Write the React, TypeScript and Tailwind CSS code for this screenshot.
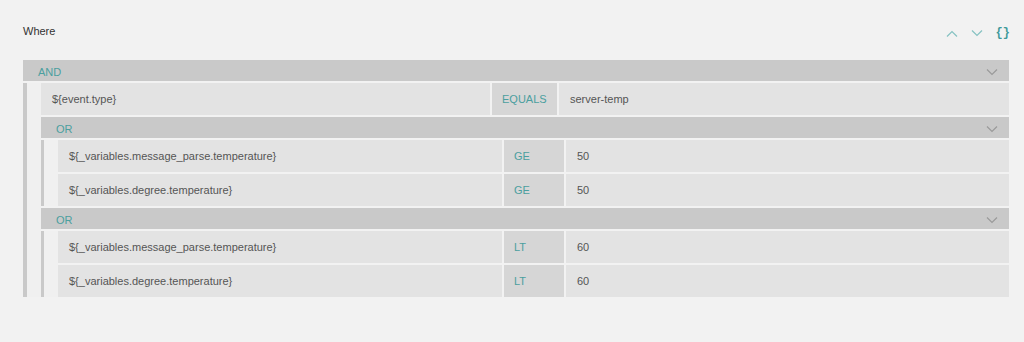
import React from "react";

const Chevron = ({ up = false, className = "" }: { up?: boolean; className?: string }) => (
  <svg width="12" height="7" viewBox="0 0 12 7" className={className} fill="none">
    <path
      d={up ? "M1 6.5 L6 1.5 L11 6.5" : "M1 0.5 L6 5.5 L11 0.5"}
      stroke="currentColor"
      strokeWidth="1.2"
    />
  </svg>
);

const GroupHeader = ({ label }: { label: string }) => (
  <div className="h-[21px] bg-[#c9c9c9] flex items-center justify-between pl-[15px] pr-[11px] pt-[3px]">
    <span className="text-[11px] text-[#4b9f9f]">{label}</span>
    <Chevron className="text-[#9a9a9a]" />
  </div>
);

const Row = ({
  field,
  op,
  value,
  fieldW,
  opW,
}: {
  field: string;
  op: string;
  value: string;
  fieldW: string;
  opW: string;
}) => (
  <div className="h-[32px] flex gap-[2px] text-[11px]">
    <div className={`${fieldW} bg-[#e3e3e3] flex items-center pl-[11px] text-[#555] pt-[1px]`}>{field}</div>
    <div className={`${opW} bg-[#d6d6d6] flex items-center pl-[10px] text-[#4b9f9f] pt-[1px]`}>{op}</div>
    <div className="flex-1 bg-[#e3e3e3] flex items-center pl-[11px] text-[#555] pt-[1px]">{value}</div>
  </div>
);

const OrGroup = ({ op, value }: { op: string; value: string }) => (
  <div className="flex flex-col gap-[2px]">
    <GroupHeader label="OR" />
    <div className="flex">
      <div className="w-[3px] bg-[#c9c9c9]" />
      <div className="w-[14px] bg-[#f0f0f0]" />
      <div className="flex-1 flex flex-col gap-[2px]">
        <Row field="${_variables.message_parse.temperature}" op={op} value={value} fieldW="w-[444px]" opW="w-[60px]" />
        <Row field="${_variables.degree.temperature}" op={op} value={value} fieldW="w-[444px]" opW="w-[60px]" />
      </div>
    </div>
  </div>
);

export default function App() {
  return (
    <div
      className="w-[1024px] h-[342px] bg-[#f2f2f2] pl-[23px] pr-[15px]"
      style={{ fontFamily: '"Liberation Sans", Arial, sans-serif' }}
    >
      <div className="h-[60px] flex items-center justify-between">
        <span className="text-[11px] text-[#333] mt-[2px]">Where</span>
        <div className="flex items-center gap-[13px] mt-[6px] mr-[-1px]">
          <Chevron up className="text-[#86c2c2]" />
          <Chevron className="text-[#86c2c2]" />
          <span
            className="text-[12px] font-bold text-[#3f9a9a]"
            style={{ fontFamily: '"Liberation Mono", monospace' }}
          >
            {"{}"}
          </span>
        </div>
      </div>
      <div className="flex flex-col gap-[2px]">
        <GroupHeader label="AND" />
        <div className="flex">
          <div className="w-[4px] bg-[#c9c9c9]" />
          <div className="w-[14px] bg-[#f0f0f0]" />
          <div className="flex-1 flex flex-col gap-[2px]">
            <Row field="${event.type}" op="EQUALS" value="server-temp" fieldW="w-[449px]" opW="w-[65px]" />
            <OrGroup op="GE" value="50" />
            <OrGroup op="LT" value="60" />
          </div>
        </div>
      </div>
    </div>
  );
}
